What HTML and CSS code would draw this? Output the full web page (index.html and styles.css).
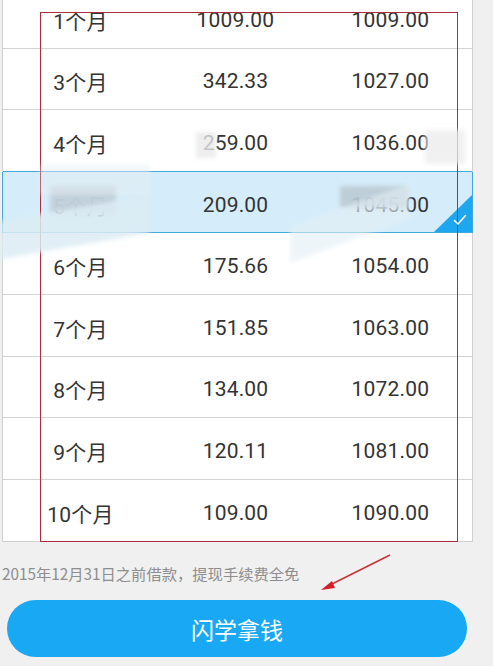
FILE: index.html
```html
<!DOCTYPE html>
<html lang="zh">
<head>
<meta charset="utf-8">
<link rel="stylesheet" href="styles.css">
</head>
<body>
<div class="page">
  <div class="table">
    <div class="row"><span>1个月</span><span>1009.00</span><span>1009.00</span></div>
    <div class="row"><span>3个月</span><span>342.33</span><span>1027.00</span></div>
    <div class="row pre"><span>4个月</span><span>259.00</span><span>1036.00</span></div>
    <div class="row sel"><span>5个月</span><span>209.00</span><span>1045.00</span>
      <svg class="check" width="14" height="12" viewBox="0 0 14 12"><path d="M1.5 6.5 L5 10 L12.5 1.5" fill="none" stroke="#ffffff" stroke-width="1.6" stroke-linecap="round" stroke-linejoin="round"/></svg>
    </div>
    <div class="row"><span>6个月</span><span>175.66</span><span>1054.00</span></div>
    <div class="row"><span>7个月</span><span>151.85</span><span>1063.00</span></div>
    <div class="row"><span>8个月</span><span>134.00</span><span>1072.00</span></div>
    <div class="row"><span>9个月</span><span>120.11</span><span>1081.00</span></div>
    <div class="row last"><span>10个月</span><span>109.00</span><span>1090.00</span></div>
  </div>
  <p class="note">2015年12月31日之前借款，提现手续费全免</p>
  <button class="btn">闪学拿钱</button>

  <div class="redbox"></div>
  <div class="mosaic m1"></div>
  <div class="mosaic m2"></div>
  <div class="mosaic m3"></div>
  <div class="mosaic m4"></div>
  <div class="mosaic m5"></div>
  <div class="mosaic m6"></div>
  <div class="mosaic m7"></div>
  <svg class="arrow" width="80" height="44" viewBox="0 0 80 44">
    <line x1="74" y1="3" x2="14" y2="33" stroke="#d2303a" stroke-width="1.5"/>
    <polygon points="5,38 16,29 19,36" fill="#d2202a"/>
  </svg>
</div>
</body>
</html>
```

FILE: styles.css
```css
* { box-sizing: border-box; }
html, body { margin: 0; padding: 0; }
body {
  background: #f0f0f0;
  width: 493px;
  height: 666px;
  overflow: hidden;
  font-family: Roboto, "Noto Sans CJK SC", sans-serif;
}
.page {
  position: relative;
  display: flow-root;
  width: 493px;
  height: 666px;
}
.table {
  margin: -13px 0 0 2px;
  width: 471px;
  background: #ffffff;
  border: 1px solid #d0d0d0;
  border-top: none;
}
.row {
  position: relative;
  height: 61.6px;
  display: grid;
  grid-template-columns: 155px 155px 155px;
  align-items: center;
  padding-top: 5px;
  border-bottom: 1px solid #d3d3d3;
  font-size: 21px;
  color: #333333;
  letter-spacing: 0.2px;
}
.row span { text-align: center; }
.row.last { border-bottom: none; }
.row.pre { border-bottom-color: #42a7da; }
.row.sel {
  background: #d5edfa;
  border-bottom-color: #42a7da;
  box-shadow: -1px 0 0 #42a7da, 1px 0 0 #42a7da;
}
.row.sel::after {
  content: "";
  position: absolute;
  right: 0;
  bottom: 0;
  width: 0;
  height: 0;
  border-left: 38px solid transparent;
  border-bottom: 37px solid #1ea6ef;
}
.check {
  position: absolute;
  right: 5px;
  bottom: 6px;
  z-index: 1;
}
.note {
  margin: 21px 0 0 2px;
  height: 20px;
  line-height: 20px;
  font-size: 15.3px;
  color: #8e8e8e;
  font-family: "Noto Sans CJK SC", sans-serif;
}
.btn {
  display: block;
  margin: 17px 0 0 7px;
  width: 460px;
  height: 57px;
  border: none;
  border-radius: 29px;
  background: #19a8f4;
  color: #ffffff;
  font-family: "Noto Sans CJK SC", sans-serif;
  font-size: 23px;
  padding: 0;
}
.redbox {
  position: absolute;
  left: 40px;
  top: 12px;
  width: 418px;
  height: 530px;
  border: 1px solid #a8303c;
}
.mosaic {
  position: absolute;
  filter: blur(2px);
}
.m1 { left: 50px; top: 186px; width: 66px; height: 28px; background: #c2d1da; opacity: 0.97; }
.m2 { left: 0px; top: 208px; width: 150px; height: 38px; background: #dcecf4; opacity: 0.85; transform: skewY(-10deg); }
.m3 { left: 340px; top: 186px; width: 68px; height: 22px; background: #bccbd5; opacity: 0.9; }
.m4 { left: 290px; top: 205px; width: 120px; height: 36px; background: #e3eff5; opacity: 0.6; transform: skewY(-20deg); }
.m5 { left: 196px; top: 132px; width: 20px; height: 26px; background: #eaeaea; opacity: 0.8; }
.m6 { left: 425px; top: 130px; width: 40px; height: 34px; background: #ececec; opacity: 0.75; }
.m7 { left: 40px; top: 165px; width: 110px; height: 30px; background: #e5eef3; opacity: 0.5; }
.arrow {
  position: absolute;
  left: 316px;
  top: 552px;
}
```
